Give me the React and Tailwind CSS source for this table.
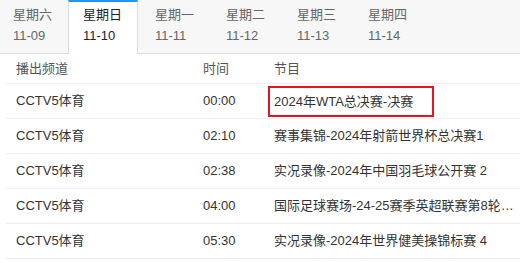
import React from 'react';

const days = [
  { name: '星期六', date: '11-09' },
  { name: '星期日', date: '11-10', active: true },
  { name: '星期一', date: '11-11' },
  { name: '星期二', date: '11-12' },
  { name: '星期三', date: '11-13' },
  { name: '星期四', date: '11-14' },
];

const rows = [
  { ch: 'CCTV5体育', time: '00:00', title: '2024年WTA总决赛-决赛', mark: true },
  { ch: 'CCTV5体育', time: '02:10', title: '赛事集锦-2024年射箭世界杯总决赛1' },
  { ch: 'CCTV5体育', time: '02:38', title: '实况录像-2024年中国羽毛球公开赛 2' },
  { ch: 'CCTV5体育', time: '04:00', title: '国际足球赛场-24-25赛季英超联赛第8轮：切尔西vs纽卡斯尔' },
  { ch: 'CCTV5体育', time: '05:30', title: '实况录像-2024年世界健美操锦标赛 4' },
];

const tabClass = (d, i) => {
  if (d.active)
    return 'w-[70px] h-[54px] -mb-px pl-[14px] pt-[2px] bg-white text-[#222] border-t-2 border-t-[#2196f3] border-x border-x-[#ddd]';
  if (i === 0) return 'w-[68px] pl-[13px] pt-[4px] text-[#666]';
  return 'w-[71px] pl-[17px] pt-[4px] text-[#666]';
};

const App = () => {
  return (
    <div className="w-[520px] h-[263px] overflow-hidden bg-white text-[13px] text-[#333] font-['Liberation_Sans','Noto_Sans_CJK_SC',sans-serif]">
      {/* Day tabs */}
      <div className="flex h-[54px] bg-[#f7f7f7] border-b border-[#ddd]">
        {days.map((d, i) => (
          <div key={d.date} className={`${tabClass(d, i)} leading-[21px]`}>
            <div>{d.name}</div>
            <div>{d.date}</div>
          </div>
        ))}
      </div>

      {/* Schedule table */}
      <div className="ml-[6px]">
        <div className="flex h-[30px] items-center border-b border-[#eee] text-[#555]">
          <div className="w-[187px] pl-[10px]">播出频道</div>
          <div className="w-[71px] pl-[10px]">时间</div>
          <div className="flex-1 pl-[10px]">节目</div>
        </div>
        {rows.map((r) => (
          <div key={r.time} className="flex h-[35px] items-center border-b border-[#eee]">
            <div className="w-[187px] pl-[10px]">{r.ch}</div>
            <div className="w-[71px] pl-[10px]">{r.time}</div>
            <div className="flex-1 min-w-0 pr-[2px]">
              {r.mark ? (
                <span className="inline-block ml-[4px] w-[166px] h-[31px] leading-[27px] border-2 border-[#e8141d] pl-[4px]">
                  {r.title}
                </span>
              ) : (
                <div className="pl-[10px] truncate">{r.title}</div>
              )}
            </div>
          </div>
        ))}
      </div>
    </div>
  );
};

export default App;
